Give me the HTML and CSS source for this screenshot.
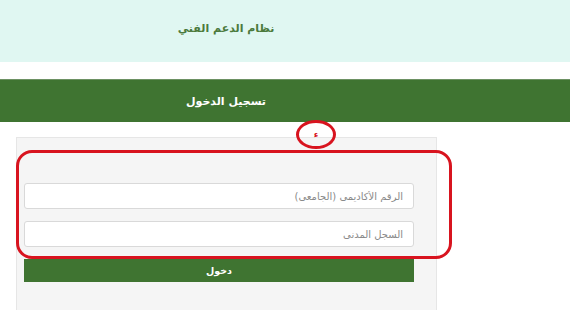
FILE: index.html
```html
<!DOCTYPE html>
<html lang="ar">
<head>
<meta charset="utf-8">
<title>نظام الدعم الفني</title>
<link rel="stylesheet" href="styles.css">
</head>
<body>
<header class="top">
  <div class="inner"><h1 class="site-title" dir="rtl">نظام الدعم الفني</h1></div>
</header>
<div class="bar">
  <div class="inner"><h2 class="bar-title" dir="rtl">تسجيل الدخول</h2></div>
</div>
<main class="page">
  <form class="card" dir="rtl">
    <input class="field" type="text" placeholder="الرقم الأكاديمي (الجامعي)">
    <input class="field" type="text" placeholder="السجل المدني">
    <button class="btn" type="button">دخول</button>
  </form>
</main>
<div class="mark-circle"><span class="mark-glyph">ء</span></div>
<div class="mark-box"></div>
</body>
</html>
```
FILE: styles.css
```css
* { box-sizing: border-box; }
html, body { margin: 0; padding: 0; background: #ffffff; }
body {
  font-family: "DejaVu Sans", "Noto Sans", sans-serif;
  width: 570px;
  height: 310px;
  overflow: hidden;
  position: relative;
}
.inner { width: 452px; text-align: center; }
.top {
  height: 62px;
  background: #e0f7f2;
  display: flex;
  align-items: center;
}
.site-title {
  margin: 0;
  font-size: 11px;
  font-weight: bold;
  color: #4b7a3c;
  position: relative;
  top: -3px;
}
.bar {
  margin-top: 17px;
  height: 43px;
  background: #3f7431;
  border-top: 1px solid #6d9163;
  display: flex;
  align-items: center;
}
.bar-title {
  margin: 0;
  font-size: 11px;
  font-weight: bold;
  color: #ffffff;
}
.page { padding-top: 15px; }
.card {
  margin: 0 0 0 16px;
  width: 421px;
  height: 173px;
  background: #f5f5f5;
  border: 1px solid #e6e6e6;
  border-bottom: none;
  padding: 45px 22px 0 7px;
  display: flex;
  flex-direction: column;
  gap: 12px;
}
.field {
  height: 26px;
  width: 390px;
  border: 1px solid #d9d9d9;
  border-radius: 3px;
  background: #ffffff;
  padding: 0 10px;
  font-family: "DejaVu Sans", sans-serif;
  font-size: 10px;
  color: #555;
}
.field::placeholder { color: #8a8a8a; }
.btn {
  height: 23px;
  width: 390px;
  border: none;
  background: #3f7431;
  color: #ffffff;
  font-family: "DejaVu Sans", sans-serif;
  font-size: 9.5px;
  font-weight: bold;
  padding: 0;
}
.mark-circle {
  position: absolute;
  left: 296px;
  top: 120px;
  width: 40px;
  height: 29px;
  border: 3px solid #d8141f;
  border-radius: 50%;
  display: flex;
  align-items: center;
  justify-content: center;
}
.mark-glyph {
  color: #d8141f;
  font-size: 9px;
  font-weight: bold;
  line-height: 1;
}
.mark-box {
  position: absolute;
  left: 16px;
  top: 150px;
  width: 436px;
  height: 109px;
  border: 3.5px solid #d8141f;
  border-radius: 16px;
}
```
